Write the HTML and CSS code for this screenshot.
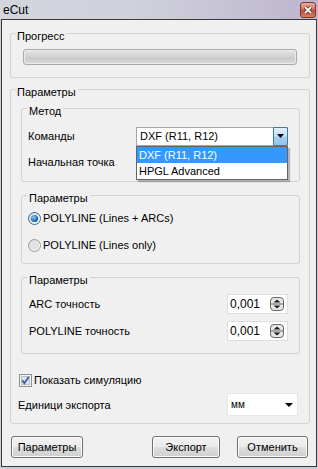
FILE: index.html
```html
<!DOCTYPE html>
<html lang="ru">
  <head>
    <meta charset="UTF-8" />
    <title>eCut</title>
    <link rel="stylesheet" href="styles.css">
  </head>
  <body>
    <div class="window">
      <div class="titlebar">
        <span class="title">eCut</span>
        <span class="closeBtn">
          <svg width="16" height="16" viewBox="0 0 16 16">
            <defs>
              <linearGradient id="closeGrad" x1="0" y1="0" x2="0" y2="1">
                <stop offset="0" stop-color="#eab0a0" />
                <stop offset="0.45" stop-color="#d57a64" />
                <stop offset="0.5" stop-color="#c4492f" />
                <stop offset="1" stop-color="#d8806a" />
              </linearGradient>
            </defs>
            <rect x="0.5" y="0.5" width="15" height="15" rx="2.5" fill="url(#closeGrad)" stroke="#7d3a2c" />
            <path d="M5 5 L11 11 M11 5 L5 11" stroke="#5a2a20" stroke-width="3.4" />
            <path d="M5 5 L11 11 M11 5 L5 11" stroke="#fff" stroke-width="1.8" />
          </svg>
        </span>
      </div>

      <div class="client">
        <fieldset class="group groupProgress">
          <legend>Прогресс</legend>
          <div class="progress"></div>
        </fieldset>

        <fieldset class="group groupParams">
          <legend>Параметры</legend>

          <fieldset class="group inner groupMethod">
            <legend>Метод</legend>
            <div class="row rowCommands">
              <span class="label">Команды</span>
              <div class="combo">
                <span class="comboText">DXF (R11, R12)</span>
                <span class="comboBtn">
                  <svg width="7" height="4" viewBox="0 0 7 4"><path d="M0 0 H7 L3.5 4 Z" fill="#000" /></svg>
                </span>
                <ul class="dropdown">
                  <li class="selected">DXF (R11, R12)</li>
                  <li>HPGL Advanced</li>
                </ul>
              </div>
            </div>
            <div class="row rowStart">
              <span class="label">Начальная точка</span>
            </div>
          </fieldset>

          <fieldset class="group inner groupRadio">
            <legend>Параметры</legend>
            <div class="radioRow">
              <svg width="13" height="13" viewBox="0 0 13 13">
                <defs>
                  <radialGradient id="dotGrad" cx="0.4" cy="0.35" r="0.7">
                    <stop offset="0" stop-color="#8cc8f6" />
                    <stop offset="0.6" stop-color="#2a7fd0" />
                    <stop offset="1" stop-color="#0d3f86" />
                  </radialGradient>
                  <linearGradient id="radioGrad" x1="0" y1="0" x2="1" y2="1">
                    <stop offset="0" stop-color="#d6d6d6" />
                    <stop offset="1" stop-color="#fbfbfb" />
                  </linearGradient>
                </defs>
                <circle cx="6.5" cy="6.5" r="6" fill="url(#radioGrad)" stroke="#3b6c93" />
                <circle cx="6.5" cy="6.5" r="3.6" fill="url(#dotGrad)" />
              </svg>
              <span>POLYLINE (Lines + ARCs)</span>
            </div>
            <div class="radioRow">
              <svg width="13" height="13" viewBox="0 0 13 13">
                <circle cx="6.5" cy="6.5" r="6" fill="url(#radioGrad)" stroke="#9a9a9a" />
                <circle cx="6.5" cy="6.5" r="4" fill="#e2e2e2" />
              </svg>
              <span>POLYLINE (Lines only)</span>
            </div>
          </fieldset>

          <fieldset class="group inner groupSpin">
            <legend>Параметры</legend>
            <div class="row spinRow">
              <span class="label">ARC точность</span>
              <div class="spin">
                <span>0,001</span>
                <svg width="14" height="14" viewBox="0 0 14 14">
                  <rect x="0.5" y="0.5" width="13" height="13" rx="3.5" fill="#e8e8e8" stroke="#666" />
                  <line x1="1" y1="7" x2="13" y2="7" stroke="#666" />
                  <path d="M7 2.5 L10.5 5.5 H3.5 Z" fill="#1e1e1e" />
                  <path d="M7 11.5 L10.5 8.5 H3.5 Z" fill="#1e1e1e" />
                </svg>
              </div>
            </div>
            <div class="row spinRow">
              <span class="label">POLYLINE точность</span>
              <div class="spin">
                <span>0,001</span>
                <svg width="14" height="14" viewBox="0 0 14 14">
                  <rect x="0.5" y="0.5" width="13" height="13" rx="3.5" fill="#e8e8e8" stroke="#666" />
                  <line x1="1" y1="7" x2="13" y2="7" stroke="#666" />
                  <path d="M7 2.5 L10.5 5.5 H3.5 Z" fill="#1e1e1e" />
                  <path d="M7 11.5 L10.5 8.5 H3.5 Z" fill="#1e1e1e" />
                </svg>
              </div>
            </div>
          </fieldset>

          <div class="checkRow">
            <svg width="13" height="13" viewBox="0 0 13 13">
              <rect x="0.5" y="0.5" width="12" height="12" fill="#f5f5f5" stroke="#8e8f8f" />
              <rect x="2.5" y="2.5" width="8" height="8" fill="#dfe5ee" stroke="#b9c3d0" />
              <path d="M3.2 6.4 L5.4 9.2 L9.8 2.8" fill="none" stroke="#42609a" stroke-width="1.9" />
            </svg>
            <span>Показать симуляцию</span>
          </div>

          <div class="row unitsRow">
            <span class="label">Единици экспорта</span>
            <div class="unitsCombo">
              <span>мм</span>
              <svg width="8" height="4" viewBox="0 0 8 4"><path d="M0 0 H8 L4 4 Z" fill="#000" /></svg>
            </div>
          </div>
        </fieldset>

        <div class="buttons">
          <button class="btn btnParams">Параметры</button>
          <button class="btn btnExport">Экспорт</button>
          <button class="btn btnCancel">Отменить</button>
        </div>
      </div>
    </div>
  </body>
</html>
```

FILE: styles.css
```css
*,
*:before,
*:after {
  margin: 0;
  padding: 0;
  box-sizing: border-box;
}

html,
body {
  width: 318px;
  height: 469px;
  overflow: hidden;
}

body {
  font-family: "Liberation Sans", Arial, sans-serif;
  font-size: 11px;
  line-height: 14px;
  color: #000;
  background-color: #c9ccd6;
}

.window {
  width: 318px;
  height: 469px;
  display: flex;
  flex-direction: column;
}

/* -- title bar */
.titlebar {
  height: 19px;
  display: flex;
  align-items: center;
  justify-content: space-between;
  padding: 0 2px 0 3px;
  background: linear-gradient(to right, #d4d6de 0%, #cfd0da 45%, #c4bfd3 80%, #bdb5cf 100%);
}

.title {
  font-size: 12px;
}

.closeBtn {
  width: 16px;
  height: 16px;
  display: block;
}

.closeBtn svg {
  display: block;
}

/* -- client area */
.client {
  height: 448px;
  margin: 0 1px;
  border: 1px solid #3a3a3a;
  background-color: #f0f0f0;
}

.group {
  min-width: 0;
  border: 1px solid #d2d2d2;
  border-radius: 3px;
}

.group > legend {
  margin-left: 4px;
  padding: 5px 2px 0 2px;
  line-height: 14px;
}

.groupProgress {
  width: 300px;
  height: 54px;
  margin: 4px 0 0 8px;
}

.progress {
  width: 274px;
  height: 16px;
  margin: 6px 0 0 12px;
  border: 1px solid #a9a9a9;
  border-radius: 3px;
  background: linear-gradient(#e4e4e4 0%, #d6d6d6 40%, #cbcbcb 60%, #d9d9d9 100%);
  box-shadow: inset 0 0 0 1px #ececec;
}

.groupParams {
  width: 300px;
  height: 344px;
  margin: 2px 0 0 8px;
}

.inner {
  width: 279px;
  margin-left: 10px;
}

.inner > legend {
  margin-left: 5px;
}

.row {
  display: flex;
  align-items: center;
  height: 20px;
}

/* -- method */
.groupMethod {
  height: 83px;
}

.rowCommands {
  margin: 8px 0 0 6px;
}

.rowCommands .label {
  width: 108px;
}

.rowStart {
  margin: 6px 0 0 6px;
}

.combo {
  position: relative;
  width: 152px;
  height: 19px;
  display: flex;
  align-items: center;
  border: 1px solid #a4a7ae;
  background-color: #fff;
}

.comboText {
  flex: 1;
  padding-left: 3px;
}

.comboBtn {
  width: 15px;
  height: 19px;
  margin: -1px -1px -1px 0;
  display: flex;
  align-items: center;
  justify-content: center;
  border: 1px solid #3d7bad;
  border-radius: 0 2px 2px 0;
  background: linear-gradient(#e3f1fb 0%, #c4e2f6 45%, #a4d0f0 55%, #8fc3e8 100%);
}

.comboBtn svg {
  display: block;
}

/* opened list of the commands combo */
.dropdown {
  position: absolute;
  top: 18px;
  left: -1px;
  width: 152px;
  list-style: none;
  border: 1px solid #646464;
  background-color: #fff;
  box-shadow: 2px 2px 1px rgba(0, 0, 0, 0.25);
  z-index: 2;
}

.dropdown li {
  height: 16px;
  padding-left: 2px;
  line-height: 16px;
}

.dropdown .selected {
  color: #fff;
  background-color: #3399ff;
}

/* -- radio group */
.groupRadio {
  height: 78px;
  margin-top: 4px;
}

.radioRow {
  display: flex;
  align-items: center;
  height: 20px;
  margin: 7px 0 0 6px;
}

.radioRow:first-of-type {
  margin-top: 3px;
}

.radioRow svg {
  display: block;
  margin-right: 2px;
}

/* -- spin group */
.groupSpin {
  height: 86px;
  margin-top: 4px;
}

.spinRow {
  justify-content: space-between;
  margin: 7px 11px 0 7px;
}

.spin {
  width: 61px;
  height: 20px;
  display: flex;
  align-items: center;
  justify-content: space-between;
  padding: 0 3px 0 2px;
  font-size: 12px;
  border: 1px solid #dedede;
  background-color: #fff;
}

.spin svg {
  display: block;
}

/* -- checkbox and units */
.checkRow {
  display: flex;
  align-items: center;
  height: 20px;
  margin: 16px 0 0 8px;
}

.checkRow svg {
  display: block;
  margin-right: 2px;
}

.unitsRow {
  justify-content: space-between;
  height: 23px;
  margin: 3px 11px 0 7px;
}

.unitsCombo {
  width: 71px;
  height: 23px;
  display: flex;
  align-items: center;
  justify-content: space-between;
  padding: 0 4px 0 3px;
  font-size: 10px;
  border: 1px solid #e6e6e6;
  background-color: #fff;
}

.unitsCombo svg {
  display: block;
}

/* -- bottom buttons */
.buttons {
  display: flex;
  margin-top: 12px;
  padding: 0 8px 0 9px;
}

.btn {
  height: 22px;
  font-family: "Liberation Sans", Arial, sans-serif;
  font-size: 11px;
  color: #000;
  border: 1px solid #707070;
  border-radius: 3px;
  background: linear-gradient(#f2f2f2 0%, #ebebeb 48%, #dddddd 52%, #cfcfcf 100%);
  box-shadow: inset 0 0 0 1px #fbfbfb;
}

.btnParams {
  width: 72px;
}

.btnExport {
  width: 68px;
  margin-left: auto;
}

.btnCancel {
  width: 71px;
  margin-left: 17px;
}
```
